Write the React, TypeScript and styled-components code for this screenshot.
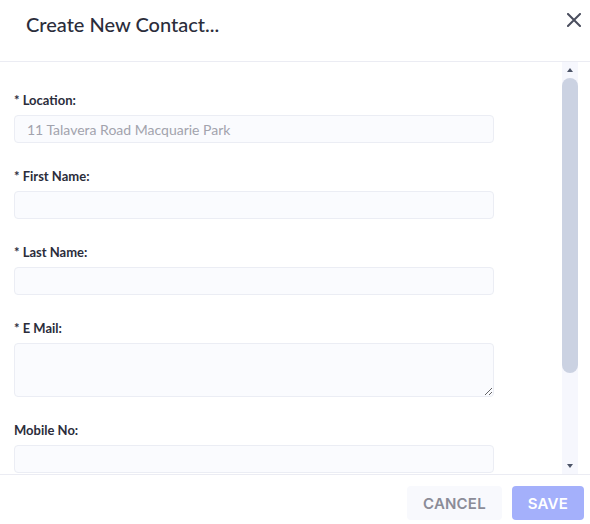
import React from 'react';
import styled, { createGlobalStyle } from 'styled-components';

const GlobalStyle = createGlobalStyle`
  html, body {
    margin: 0;
    padding: 0;
    background: #ffffff;
  }
  body {
    font-family: 'Lato', 'Noto Sans', sans-serif;
    color: #2b2d3b;
  }
  * {
    box-sizing: border-box;
  }
`;

const Modal = styled.div`
  display: flex;
  flex-direction: column;
  width: 590px;
  height: 524px;
  background: #ffffff;
`;

const Header = styled.div`
  display: flex;
  justify-content: space-between;
  align-items: flex-start;
  height: 62px;
  padding: 10px 7px 0 26px;
  border-bottom: 1px solid #ebecf3;
  flex-shrink: 0;
`;

const Title = styled.h2`
  margin: 0;
  font-size: 20px;
  line-height: 28px;
  font-weight: 500;
  color: #2b2d3b;
`;

const CloseButton = styled.button`
  display: flex;
  align-items: center;
  justify-content: center;
  width: 18px;
  height: 18px;
  margin-top: 1px;
  padding: 0;
  border: none;
  background: transparent;
  cursor: pointer;
`;

const BodyRow = styled.div`
  flex: 1;
  min-height: 0;
  display: flex;
  margin-right: 12px;
`;

const Body = styled.div`
  flex: 1;
  min-width: 0;
  overflow: hidden;
  padding: 29px 0 0 14px;
`;

const ScrollBar = styled.div`
  display: flex;
  flex-direction: column;
  width: 16px;
  background: #f6f7fd;
  flex-shrink: 0;
`;

const ScrollArrow = styled.div<{ $down?: boolean }>`
  display: flex;
  align-items: center;
  justify-content: center;
  height: 16px;
  flex-shrink: 0;

  &::after {
    content: '';
    width: 0;
    height: 0;
    border-left: 3.5px solid transparent;
    border-right: 3.5px solid transparent;
    ${({ $down }) =>
      $down ? 'border-top: 4px solid #4c5468;' : 'border-bottom: 4px solid #4c5468;'}
  }
`;

const ScrollTrack = styled.div`
  flex: 1;
  display: flex;
  flex-direction: column;
`;

const ScrollThumb = styled.div`
  height: 295px;
  background: #cbd2e2;
  border-radius: 8px;
`;

const Field = styled.div`
  display: flex;
  flex-direction: column;
  width: 480px;
  margin-bottom: 24px;
`;

const Label = styled.label`
  font-size: 13px;
  line-height: 18px;
  font-weight: 700;
  color: #2b2d3b;
  margin-bottom: 6px;
`;

const Input = styled.input`
  width: 100%;
  height: 28px;
  padding: 0 12px;
  border: 1px solid #ebedf4;
  border-radius: 4px;
  background: #fafbfe;
  font-family: 'Lato', 'Noto Sans', sans-serif;
  font-size: 14px;
  color: #2b2d3b;
  outline: none;

  &:disabled {
    color: #a2a3ad;
  }
`;

const TextArea = styled.textarea`
  width: 100%;
  height: 54px;
  padding: 6px 12px;
  border: 1px solid #ebedf4;
  border-radius: 4px;
  background: #fafbfe;
  font-family: 'Lato', 'Noto Sans', sans-serif;
  font-size: 14px;
  color: #2b2d3b;
  resize: vertical;
  outline: none;
  display: block;
`;

const Footer = styled.div`
  display: flex;
  justify-content: flex-end;
  align-items: flex-start;
  gap: 10px;
  height: 50px;
  padding: 11px 6px 0 0;
  border-top: 1px solid #ebecf3;
  flex-shrink: 0;
`;

const Button = styled.button<{ $primary?: boolean }>`
  height: 34px;
  padding: 0 16px;
  border: none;
  border-radius: 4px;
  font-family: 'Inter', 'Open Sans', sans-serif;
  font-size: 15px;
  font-weight: 600;
  letter-spacing: 0.2px;
  text-transform: uppercase;
  cursor: pointer;
  background: ${({ $primary }) => ($primary ? '#a4b0fb' : '#f8f9fd')};
  color: ${({ $primary }) => ($primary ? '#ffffff' : '#8b8c98')};
`;

const CloseIcon = () => (
  <svg width="14" height="14" viewBox="0 0 14 14">
    <path d="M1 1 L13 13 M13 1 L1 13" stroke="#4a4e5e" strokeWidth="2" strokeLinecap="square" />
  </svg>
);

const App = () => (
  <>
    <GlobalStyle />
    <Modal>
      <Header>
        <Title>Create New Contact...</Title>
        <CloseButton aria-label="Close">
          <CloseIcon />
        </CloseButton>
      </Header>
      <BodyRow>
        <Body>
          <Field>
            <Label>* Location:</Label>
            <Input disabled value="11 Talavera Road Macquarie Park" readOnly />
          </Field>
          <Field>
            <Label>* First Name:</Label>
            <Input />
          </Field>
          <Field>
            <Label>* Last Name:</Label>
            <Input />
          </Field>
          <Field>
            <Label>* E Mail:</Label>
            <TextArea />
          </Field>
          <Field>
            <Label>Mobile No:</Label>
            <Input />
          </Field>
        </Body>
        <ScrollBar>
          <ScrollArrow />
          <ScrollTrack>
            <ScrollThumb />
          </ScrollTrack>
          <ScrollArrow $down />
        </ScrollBar>
      </BodyRow>
      <Footer>
        <Button>Cancel</Button>
        <Button $primary>Save</Button>
      </Footer>
    </Modal>
  </>
);

export default App;
